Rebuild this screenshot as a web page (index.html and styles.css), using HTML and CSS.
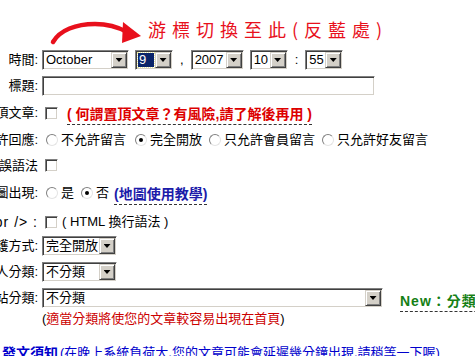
FILE: index.html
```html
<!DOCTYPE html>
<html lang="zh-Hant">
<head>
<meta charset="utf-8">
<title>發表文章</title>
<link rel="stylesheet" href="styles.css">
</head>
<body>
<div class="page">
  <div class="hint">
    <svg class="arrow" width="150" height="50" viewBox="0 0 150 50" aria-hidden="true">
      <path d="M53 42 C60 30 76 24 95 24 C108 24 118 27 127 32" fill="none" stroke="#e8101c" stroke-width="4.5" stroke-linecap="round"/>
      <polygon points="123,22 141,36 122,43" fill="#e8101c"/>
    </svg>
    <span class="hint-text">游標切換至此(反藍處)</span>
  </div>

  <div class="row h20">
    <span class="label">時間:</span>
    <div class="field gap6">
      <span class="sel w87"><span class="val">October</span><span class="btn"></span></span>
      <span class="sel w38 focus"><span class="val"><span class="hl">9</span></span><span class="btn"></span></span>
      <span class="sep">,</span>
      <span class="sel w53"><span class="val">2007</span><span class="btn"></span></span>
      <span class="sel w38"><span class="val">10</span><span class="btn"></span></span>
      <span class="sep">:</span>
      <span class="sel w38"><span class="val">55</span><span class="btn"></span></span>
    </div>
  </div>

  <div class="row h20 mt6">
    <span class="label">標題:</span>
    <div class="field"><span class="inp"></span></div>
  </div>

  <div class="row h28 mt3">
    <span class="label">置頂文章:</span>
    <div class="field gap9">
      <span class="chk"></span>
      <span class="warn">( 何謂置頂文章？有風險,請了解後再用 )</span>
    </div>
  </div>

  <div class="row h26">
    <span class="label">允許回應:</span>
    <div class="field opts">
      <span class="opt o1"><span class="rad"></span>不允許留言</span>
      <span class="opt o2"><span class="rad on"></span>完全開放</span>
      <span class="opt o3"><span class="rad"></span>只允許會員留言</span>
      <span class="opt"><span class="rad"></span>只允許好友留言</span>
    </div>
  </div>

  <div class="row h25">
    <span class="label">修正錯誤語法</span>
    <div class="field"><span class="chk"></span></div>
  </div>

  <div class="row h30">
    <span class="label">地圖出現:</span>
    <div class="field opts">
      <span class="opt o-yes"><span class="rad"></span>是</span>
      <span class="opt"><span class="rad on"></span>否</span>
      <span class="maplink">(地圖使用教學)</span>
    </div>
  </div>

  <div class="row h28">
    <span class="label label-br">&lt;br /&gt; :</span>
    <div class="field gap3">
      <span class="chk"></span>
      <span>( HTML 換行語法 )</span>
    </div>
  </div>

  <div class="row h20">
    <span class="label">保護方式:</span>
    <div class="field">
      <span class="sel w75"><span class="val">完全開放</span><span class="btn"></span></span>
    </div>
  </div>

  <div class="row h20 mt6">
    <span class="label">個人分類:</span>
    <div class="field">
      <span class="sel w75"><span class="val">不分類</span><span class="btn"></span></span>
    </div>
  </div>

  <div class="row h20 mt6">
    <span class="label">全站分類:</span>
    <div class="field gap17">
      <span class="sel w341"><span class="val">不分類</span><span class="btn"></span></span>
      <span class="newlink">New：分類說明</span>
    </div>
  </div>

  <div class="row h16 mt3">
    <span class="label"></span>
    <div class="field"><span>( </span><span class="red">適當分類將使您的文章較容易出現在首頁</span><span> )</span></div>
  </div>

  <div class="row h26 mt13 foot">
    <span class="foot-b">發文須知</span><span>(在晚上系統負荷大,您的文章可能會延遲幾分鐘出現,請稍等一下喔)</span>
  </div>
</div>
</body>
</html>
```

FILE: styles.css
```css
html, body {
  margin: 0;
  padding: 0;
  background: #fff;
}
body {
  font-family: "Liberation Sans", "Noto Sans CJK TC", sans-serif;
  font-size: 13px;
  color: #000;
  overflow: hidden;
}
.page {
  width: 475px;
  height: 356px;
  overflow: hidden;
  position: relative;
}
.hint {
  position: relative;
  height: 50px;
  box-sizing: border-box;
  padding: 20px 0 0 148px;
}
.hint-text {
  display: block;
  font-family: "Noto Sans CJK TC", sans-serif;
  font-size: 18px;
  line-height: 18px;
  letter-spacing: 6px;
  color: #e8101c;
}
.arrow {
  position: absolute;
  left: 0;
  top: 0;
}
.row {
  display: flex;
  align-items: center;
  white-space: nowrap;
  line-height: 16px;
}
.h16 { height: 16px; }
.h20 { height: 20px; }
.h25 { height: 25px; }
.h26 { height: 26px; }
.h28 { height: 28px; }
.h30 { height: 30px; }
.mt3 { margin-top: 3px; }
.mt6 { margin-top: 6px; }
.mt13 { margin-top: 13px; }

.label {
  width: 38px;
  flex: none;
  display: flex;
  justify-content: flex-end;
}
.label-br {
  font-size: 14px;
  letter-spacing: 1px;
}
.field {
  display: flex;
  align-items: center;
  margin-left: 4px;
}
.gap3 { gap: 4px; }
.gap6 { gap: 6px; }
.gap9 { gap: 9px; }
.gap17 { gap: 17px; }
.sep { padding: 0 1px; }

.sel, .inp {
  display: flex;
  height: 20px;
  box-sizing: border-box;
  border: 1px solid;
  border-color: #808080 #fff #fff #808080;
  box-shadow: inset 1px 1px 0 #404040, inset -1px -1px 0 #d4d0c8;
  background: #fff;
  padding: 1px;
}
.w38 { width: 38px; }
.w53 { width: 53px; }
.w75 { width: 75px; }
.w87 { width: 87px; }
.w341 { width: 341px; }
.inp { width: 333px; }
.val {
  flex: 1;
  display: flex;
  align-items: center;
  padding-left: 2px;
  overflow: hidden;
}
.focus .val {
  padding: 1px;
}
.hl {
  flex: 1;
  align-self: stretch;
  display: flex;
  align-items: center;
  padding-left: 1px;
  background: #0a246a;
  color: #fff;
  outline: 1px dotted #e8e8a0;
}
.btn {
  flex: none;
  width: 16px;
  height: 16px;
  box-sizing: border-box;
  background: #d4d0c8;
  border: 1px solid;
  border-color: #d4d0c8 #404040 #404040 #d4d0c8;
  box-shadow: inset 1px 1px 0 #fff, inset -1px -1px 0 #808080;
  display: flex;
  align-items: center;
  justify-content: center;
}
.btn::after {
  content: "";
  width: 7px;
  height: 4px;
  background: #000;
  clip-path: polygon(0 0, 100% 0, 50% 100%);
}

.chk {
  width: 13px;
  height: 13px;
  box-sizing: border-box;
  margin-left: 3px;
  border: 1px solid;
  border-color: #808080 #fff #fff #808080;
  box-shadow: inset 1px 1px 0 #404040, inset -1px -1px 0 #d4d0c8;
  background: #fff;
}
.opts {
  gap: 0;
  padding-left: 4px;
}
.opt {
  display: flex;
  align-items: center;
  flex: none;
  box-sizing: border-box;
}
.o1 { width: 89px; }
.o2 { width: 74px; }
.o3 { width: 113px; }
.o-yes { width: 35px; }
.rad {
  flex: none;
  width: 12px;
  height: 12px;
  box-sizing: border-box;
  margin-right: 3px;
  border-radius: 50%;
  border: 1px solid;
  border-color: #808080 #e4e4e4 #e4e4e4 #808080;
  background: #fff;
  display: flex;
  align-items: center;
  justify-content: center;
}
.rad.on::after {
  content: "";
  width: 4px;
  height: 4px;
  border-radius: 50%;
  background: #000;
}

.warn {
  color: #dd0000;
  font-weight: bold;
  font-size: 14px;
  padding-bottom: 2px;
  border-bottom: 1px dashed #333;
  transform: translateY(2px);
}
.maplink {
  color: #1c1caa;
  font-weight: bold;
  font-size: 14px;
  margin-left: 5px;
  padding-bottom: 2px;
  border-bottom: 1px dashed #333;
  transform: translateY(2px);
}
.newlink {
  color: #158015;
  font-weight: bold;
  font-size: 14px;
  letter-spacing: 1px;
  padding-bottom: 2px;
  border-bottom: 1px dashed #333;
  transform: translateY(4px);
}
.red {
  color: #cc0000;
}
.foot {
  padding-left: 2px;
  color: #0000cc;
}
.foot-b {
  font-weight: bold;
  font-size: 14px;
  margin-right: 2px;
}
```
